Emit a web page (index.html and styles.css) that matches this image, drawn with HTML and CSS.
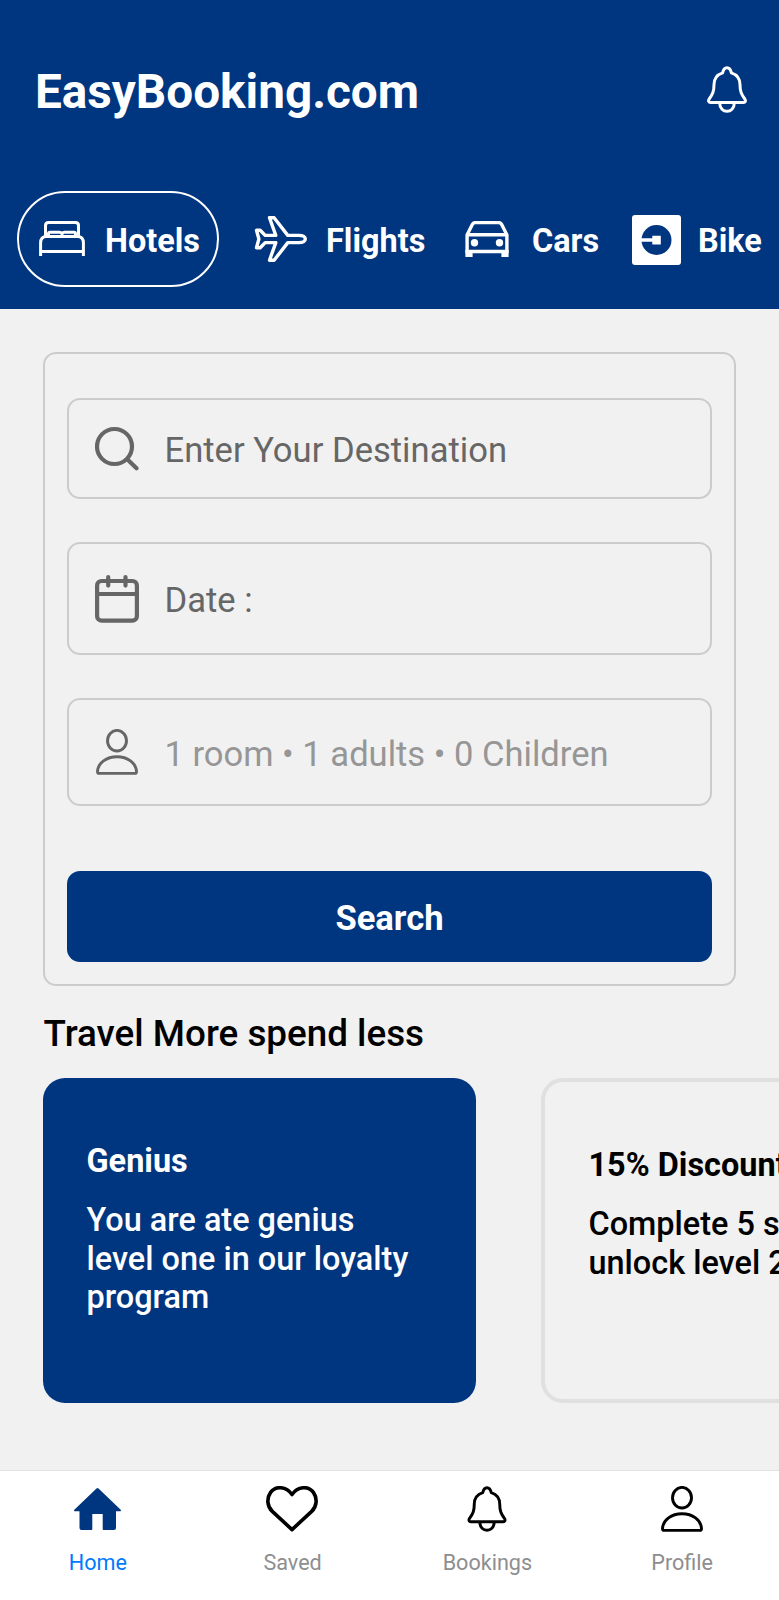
FILE: index.html
```html
<!DOCTYPE html>
<html lang="en">
<head>
<meta charset="utf-8">
<title>EasyBooking.com</title>
<link rel="stylesheet" href="styles.css">
</head>
<body>
<svg class="defs" width="0" height="0" aria-hidden="true">
  <symbol id="bell" viewBox="0 0 40 47">
    <path d="M15.600 6.800C16.400 3.200 17.800 1.700 20 1.700s3.600 1.500 4.400 5.100C30.400 8.800 33 13 33 18.500c0 7 1.300 9.800 4.800 14.500 1.200 2 .6 3.600-1.400 3.600H3.600c-2 0-2.600-1.600-1.400-3.600C5.700 28.300 7 25.500 7 18.500c0-5.500 2.600-9.700 8.600-11.700ZM12.700 37c0 11 14.600 11 14.600 0" fill="none" stroke="currentColor" stroke-width="3" stroke-linejoin="round"/>
  </symbol>
  <symbol id="person" viewBox="0 0 42 46">
    <g fill="none" stroke="currentColor" stroke-width="2.900" stroke-linejoin="round"><ellipse cx="21" cy="11.700" rx="9.500" ry="10.300"/><path d="M1.500 42.500C2 33.800 10.500 27.700 21 27.700S40 33.800 40.500 42.500q0 1.900-1.500 1.900H3q-1.500 0-1.500-1.900Z"/></g>
  </symbol>
</svg>
<div class="app">
  <header class="header">
    <div class="topbar">
      <h1 class="brand">EasyBooking.com</h1>
      <svg class="bell"><use href="#bell"/></svg>
    </div>
    <nav class="tabs">
      <a class="tab tab-active">
        <svg class="ico-bed" viewBox="0 0 46 36" fill="none" stroke="#fff" stroke-width="3" stroke-linejoin="round"><path d="M6.500 15.500V4.500q0-3 3-3h27q3 0 3 3v11M9.500 14.500v-1.700q0-1.500 1.500-1.500h9.500q1.500 0 2.500 1.500 1-1.500 2.500-1.500H35q1.500 0 1.500 1.500v1.700M1.600 35V22q0-6.500 6-6.500h30.800q6 0 6 6.500v13M1.600 30.500h42.800"/></svg>
        <span>Hotels</span>
      </a>
      <a class="tab tab-flights">
        <svg class="ico-plane" viewBox="0 0 53 46" fill="none" stroke="#fff" stroke-width="3.400" stroke-linejoin="round"><path d="M15.500 1.700h4.600L33.800 19.400h11.200c4.200 0 6.300 1.800 6.300 3.600s-2.100 3.600-6.300 3.600H33.800L20.100 44.300h-4.600l6.300-17.700H11.200l-5 5.100H2.500L4.900 23 2.500 14.300h3.700l5 5.100h10.600Z"/></svg>
        <span>Flights</span>
      </a>
      <a class="tab tab-cars">
        <svg class="ico-car" viewBox="0 0 44 36"><path d="M10.300 1.600h23.400q2.200 0 3 2l5.200 10.200v16.700H2.100V13.800L7.300 3.600q.8-2 3-2ZM2.100 13.700h39.800" fill="none" stroke="#fff" stroke-width="3.400"/><circle cx="9.500" cy="21.800" r="3.700" fill="#fff"/><circle cx="34.500" cy="21.800" r="3.700" fill="#fff"/><path d="M.4 29h7.200v7H.4zM36.400 29h7.200v7h-7.200z" fill="#fff"/></svg>
        <span>Cars</span>
      </a>
      <a class="tab tab-bike">
        <svg class="ico-bike" viewBox="0 0 49 50"><rect width="49" height="50" rx="3" fill="#fff"/><circle cx="24.500" cy="25" r="15" fill="#003580"/><path d="M9 23.300h11.300v-2.600h8.500v8.800h-8.500v-2.800H9Z" fill="#fff"/></svg>
        <span>Bike</span>
      </a>
    </nav>
  </header>
  <main class="content">
    <form class="search-card">
      <div class="field field-destination">
        <svg viewBox="0 0 44 48" fill="none" stroke="#666" stroke-width="4.200" stroke-linecap="round"><circle cx="19.500" cy="21.500" r="17.500"/><path d="m32.500 34.500 9 8.800"/></svg>
        <span>Enter Your Destination</span>
      </div>
      <div class="field field-date">
        <svg viewBox="0 0 44 48" fill="none" stroke="#666" stroke-width="4.200" stroke-linecap="round"><rect x="2.100" y="6" width="39.800" height="39.700" rx="4.500"/><path d="M2 19h40M13.200 2.100v8.500M30.500 2.100v8.500"/></svg>
        <span>Date :</span>
      </div>
      <div class="field field-guests">
        <svg class="guest-icon"><use href="#person"/></svg>
        <span>1 room • 1 adults • 0 Children</span>
      </div>
      <button class="search-btn" type="button">Search</button>
    </form>
    <h2 class="section-title">Travel More spend less</h2>
    <div class="offers">
      <article class="offer offer-genius">
        <h3>Genius</h3>
        <p>You are ate genius level one in our loyalty program</p>
      </article>
      <article class="offer offer-discount">
        <h3>15% Discounts</h3>
        <p>Complete 5 stays to unlock level 2</p>
      </article>
    </div>
  </main>
  <nav class="bottom-nav">
    <a class="nav-item nav-current">
      <svg class="nav-home" viewBox="0 0 47 42"><path d="M22.500.5q1-.9 2 0L46.700 21.800q.6 1.500-.6 1.500H42V40q0 2-2 2H29.500q-.8 0-.8-.8V26H18.300v15.200q0 .8-.8.8H7.500q-2 0-2-2V23.300H.900q-1.200 0-.6-1.500Z" fill="#003580"/></svg>
      <span>Home</span>
    </a>
    <a class="nav-item">
      <svg class="nav-heart" viewBox="0 0 52 46"><path d="M26 8.500C20 0 9.500-.3 4.600 6.400c-4.200 6-3.500 14 1.700 19L26 43.600l19.700-18.200c5.200-5 5.900-13 1.700-19C42.500-.3 32 0 26 8.500Z" fill="none" stroke="#000" stroke-width="3.600" stroke-linejoin="round"/></svg>
      <span>Saved</span>
    </a>
    <a class="nav-item">
      <svg class="nav-bell"><use href="#bell"/></svg>
      <span>Bookings</span>
    </a>
    <a class="nav-item">
      <svg class="nav-person"><use href="#person"/></svg>
      <span>Profile</span>
    </a>
  </nav>
</div>
</body>
</html>
```
FILE: styles.css
```css
* { box-sizing: border-box; }
body { margin: 0; font-family: Roboto, "Liberation Sans", sans-serif; background: #f1f1f1; }
h1, h2, h3, p { margin: 0; }
svg { display: block; flex: none; }
.defs { display: none; }
.app { width: 779px; height: 1600px; display: flex; flex-direction: column; overflow: hidden; }

.header { height: 309px; background: #003580; color: #fff; }
.topbar { display: flex; justify-content: space-between; padding: 65px 32px 0 35px; height: 191px; }
.brand { font-size: 47.700px; font-weight: 700; line-height: 54px; white-space: nowrap; }
.bell { width: 40px; height: 47px; margin-top: 1px; }
.tabs { display: flex; height: 96px; padding-left: 17px; }
.tab { display: flex; align-items: center; flex: none; font-size: 32.450px; font-weight: 700; line-height: 40px; white-space: nowrap; }
.tab span { padding-top: 4px; }
.tab-active { width: 202px; border: 2px solid #fff; border-radius: 48px; padding-left: 20px; gap: 20px; }
.ico-bed { width: 46px; height: 36px; }
.tab-flights { margin-left: 35px; width: 211px; gap: 19px; }
.ico-plane { width: 53px; height: 46px; }
.tab-cars { width: 167px; gap: 23px; }
.ico-car { width: 44px; height: 36px; }
.tab-bike { gap: 17px; }
.tab-bike span { padding-top: 3px; }
.ico-bike { width: 49px; height: 50px; margin-top: 1px; }

.content { flex: 1; min-height: 0; padding: 43px 0 0 43px; overflow: hidden; }
.search-card { width: 693px; height: 634px; border: 2px solid #ccc; border-radius: 13px; padding: 44px 22px 0; display: flex; flex-direction: column; }
.field { display: flex; align-items: center; flex: none; gap: 25.500px; padding-left: 26px; border: 2px solid #ccc; border-radius: 13px; font-size: 34.600px; line-height: 42px; color: #666; }
.field svg { width: 44px; height: 48px; }
.field span { padding-top: 3px; white-space: nowrap; }
.field-destination { height: 101px; }
.field-date { height: 113px; margin-top: 43px; }
.field-guests { height: 108px; margin-top: 43px; color: #969696; font-size: 34.550px; }
.field .guest-icon { width: 42px; height: 46px; margin: 0 1px; color: #666; }
.search-btn { flex: none; height: 91px; margin-top: 65px; padding: 3px 0 0; border: 0; border-radius: 13px; background: #003580; color: #fff; font: 700 34.600px/42px Roboto, "Liberation Sans", sans-serif; }
.section-title { margin-top: 26px; padding-left: 0.500px; height: 66px; font-size: 36.800px; font-weight: 500; line-height: 43px; color: #000; white-space: nowrap; }
.offers { display: flex; gap: 65px; }
.offer { flex: none; width: 433px; height: 325px; border-radius: 22px; padding: 64px 64px 0 43.500px; font-size: 32.450px; line-height: 38.300px; }
.offer h3 { font-size: inherit; font-weight: 700; }
.offer p { margin-top: 21px; font-weight: 500; }
.offer-genius { background: #003580; color: #fff; }
.offer-discount { border: 4px solid #e0e0e0; color: #000; }

.bottom-nav { height: 130px; flex: none; display: grid; grid-template-columns: repeat(4, 1fr); background: #fff; border-top: 1px solid #e2e2e2; }
.nav-item { display: flex; flex-direction: column; align-items: center; justify-content: flex-start; padding-top: 15px; font-size: 21.600px; line-height: 26px; color: #8e8e8f; }
.nav-item span { margin-top: 18px; padding-left: 1px; }
.nav-current { color: #007aff; }
.nav-home { width: 47px; height: 42px; margin: 2px 0; }
.nav-heart { width: 52px; height: 46px; }
.nav-bell { width: 40px; height: 46px; color: #000; }
.nav-person { width: 42px; height: 46px; color: #000; }
```
